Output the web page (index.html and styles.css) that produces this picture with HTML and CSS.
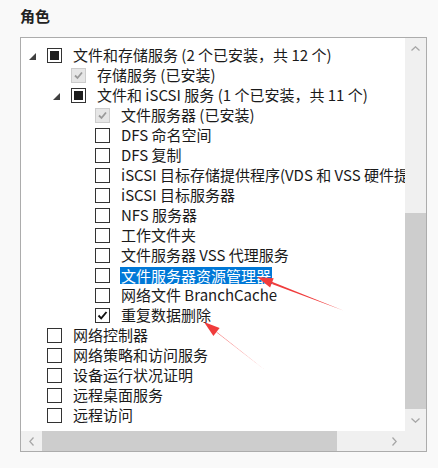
FILE: index.html
```html
<!DOCTYPE html>
<html lang="zh-CN">
<head>
<meta charset="utf-8">
<link rel="stylesheet" href="styles.css">
</head>
<body>
<div class="page">
  <div class="title">角色</div>
  <div class="listbox">
    <div class="viewport">
      <div class="row lv0"><span class="tog"><svg width="7" height="7" viewBox="0 0 7 7"><polygon points="7,0 7,7 0,7" fill="#404040"/></svg></span><span class="cb ind"><i></i></span><span class="lbl">文件和存储服务 (2 个已安装，共 12 个)</span></div>
      <div class="row lv1"><span class="tog"></span><span class="cb dis"><svg width="13" height="13" viewBox="0 0 13 13"><polyline points="3,6.5 5.5,9 10,3.5" fill="none" stroke="#9a9a9a" stroke-width="1.8"/></svg></span><span class="lbl">存储服务 (已安装)</span></div>
      <div class="row lv1"><span class="tog"><svg width="7" height="7" viewBox="0 0 7 7"><polygon points="7,0 7,7 0,7" fill="#404040"/></svg></span><span class="cb ind"><i></i></span><span class="lbl">文件和 iSCSI 服务 (1 个已安装，共 11 个)</span></div>
      <div class="row lv2"><span class="tog"></span><span class="cb dis"><svg width="13" height="13" viewBox="0 0 13 13"><polyline points="3,6.5 5.5,9 10,3.5" fill="none" stroke="#9a9a9a" stroke-width="1.8"/></svg></span><span class="lbl">文件服务器 (已安装)</span></div>
      <div class="row lv2"><span class="tog"></span><span class="cb"></span><span class="lbl">DFS 命名空间</span></div>
      <div class="row lv2"><span class="tog"></span><span class="cb"></span><span class="lbl">DFS 复制</span></div>
      <div class="row lv2"><span class="tog"></span><span class="cb"></span><span class="lbl">iSCSI 目标存储提供程序(VDS 和 VSS 硬件提供程序)</span></div>
      <div class="row lv2"><span class="tog"></span><span class="cb"></span><span class="lbl">iSCSI 目标服务器</span></div>
      <div class="row lv2"><span class="tog"></span><span class="cb"></span><span class="lbl">NFS 服务器</span></div>
      <div class="row lv2"><span class="tog"></span><span class="cb"></span><span class="lbl">工作文件夹</span></div>
      <div class="row lv2"><span class="tog"></span><span class="cb"></span><span class="lbl">文件服务器 VSS 代理服务</span></div>
      <div class="row lv2"><span class="tog"></span><span class="cb"></span><span class="lbl sel">文件服务器资源管理器</span></div>
      <div class="row lv2"><span class="tog"></span><span class="cb"></span><span class="lbl">网络文件 BranchCache</span></div>
      <div class="row lv2"><span class="tog"></span><span class="cb on"><svg width="13" height="13" viewBox="0 0 13 13"><polyline points="2.5,6.5 5.2,9.3 10.5,3" fill="none" stroke="#111" stroke-width="1.9"/></svg></span><span class="lbl">重复数据删除</span></div>
      <div class="row lv0"><span class="tog"></span><span class="cb"></span><span class="lbl">网络控制器</span></div>
      <div class="row lv0"><span class="tog"></span><span class="cb"></span><span class="lbl">网络策略和访问服务</span></div>
      <div class="row lv0"><span class="tog"></span><span class="cb"></span><span class="lbl">设备运行状况证明</span></div>
      <div class="row lv0"><span class="tog"></span><span class="cb"></span><span class="lbl">远程桌面服务</span></div>
      <div class="row lv0"><span class="tog"></span><span class="cb"></span><span class="lbl">远程访问</span></div>
    </div>
    <div class="vbar">
      <div class="sbtn"><svg width="9" height="5" viewBox="0 0 9 5"><polyline points="0.5,4.5 4.5,0.8 8.5,4.5" fill="none" stroke="#a6a6a6" stroke-width="1.3"/></svg></div>
      <div class="track"></div>
      <div class="vthumb"></div>
      <div class="sbtn down"><svg width="9" height="5" viewBox="0 0 9 5"><polyline points="0.5,0.5 4.5,4.2 8.5,0.5" fill="none" stroke="#a6a6a6" stroke-width="1.3"/></svg></div>
    </div>
    <div class="hbar">
      <div class="hbtn"><svg width="5" height="9" viewBox="0 0 5 9"><polyline points="4.5,0.5 0.8,4.5 4.5,8.5" fill="none" stroke="#a6a6a6" stroke-width="1.3"/></svg></div>
      <div class="hthumb"></div>
      <div class="track"></div>
      <div class="hbtn"><svg width="5" height="9" viewBox="0 0 5 9"><polyline points="0.5,0.5 4.2,4.5 0.5,8.5" fill="none" stroke="#a6a6a6" stroke-width="1.3"/></svg></div>
    </div>
    <div class="corner"></div>
  </div>
</div>
<svg class="arrows" width="438" height="468" viewBox="0 0 438 468">
  <polygon points="271.9,282.9 343,311 271.9,282.9" fill="none"/>
  <polygon points="271.3,281.5 343.3,310.5 272.5,284.3" fill="#f03c3c"/>
  <polygon points="257,277 270.1,287.5 273.7,278.3" fill="#f03c3c"/>
  <polygon points="215.5,330.9 264.3,369.6 217.4,333.1" fill="#f03c3c"/>
  <polygon points="204,322 213.4,335.9 219.6,328.1" fill="#f03c3c"/>
</svg>
</body>
</html>
```

FILE: styles.css
```css
html, body {
  margin: 0;
  padding: 0;
  background: #f9f9f9;
}
body {
  width: 438px;
  height: 468px;
  overflow: hidden;
  position: relative;
  font-family: "Noto Sans CJK SC", "Noto Sans", sans-serif;
  color: #1a1a1a;
}
.page {
  padding: 6px 0 0 20px;
}
.title {
  font-size: 15px;
  font-weight: bold;
  line-height: 20px;
  height: 20px;
  margin-bottom: 11px;
  color: #222;
}
.listbox {
  width: 405px;
  height: 413px;
  border: 1px solid #acacac;
  background: #fff;
  display: grid;
  grid-template-columns: 384px 21px;
  grid-template-rows: 393px 20px;
}
.viewport {
  overflow: hidden;
  padding-top: 7px;
  box-sizing: border-box;
}
.row {
  display: flex;
  align-items: center;
  height: 20px;
  white-space: nowrap;
  font-size: 15px;
  line-height: 20px;
}
.lv0 { padding-left: 8px; }
.lv1 { padding-left: 32px; }
.lv2 { padding-left: 56px; }
.tog {
  width: 18px;
  height: 20px;
  flex: none;
  display: flex;
  align-items: center;
  padding-top: 3px;
  box-sizing: border-box;
}
.cb {
  width: 15px;
  height: 15px;
  flex: none;
  box-sizing: border-box;
  border: 1px solid #333;
  background: #fff;
  margin-right: 11px;
  display: flex;
  align-items: center;
  justify-content: center;
}
.cb.ind i {
  display: block;
  width: 9px;
  height: 9px;
  background: #1e1e1e;
}
.cb.dis {
  border-color: #cccccc;
  background: #e6e6e6;
}
.lbl {
  padding: 0 1px;
  margin-left: -1px;
}
.sel {
  background: #0078d7;
  color: #fff;
  line-height: 17px;
  height: 17px;
}
.vbar {
  background: #f0f0f0;
  display: grid;
  grid-template-rows: 20px 155px 196px 22px;
}
.sbtn {
  display: flex;
  align-items: center;
  justify-content: center;
}
.vthumb {
  background: #cdcdcd;
}
.hbar {
  background: #f0f0f0;
  display: grid;
  grid-template-columns: 21px 295px 1fr 21px;
}
.hbtn {
  display: flex;
  align-items: center;
  justify-content: center;
}
.hthumb {
  background: #cdcdcd;
}
.corner {
  background: #f0f0f0;
}
.arrows {
  position: absolute;
  left: 0;
  top: 0;
  pointer-events: none;
}
```
